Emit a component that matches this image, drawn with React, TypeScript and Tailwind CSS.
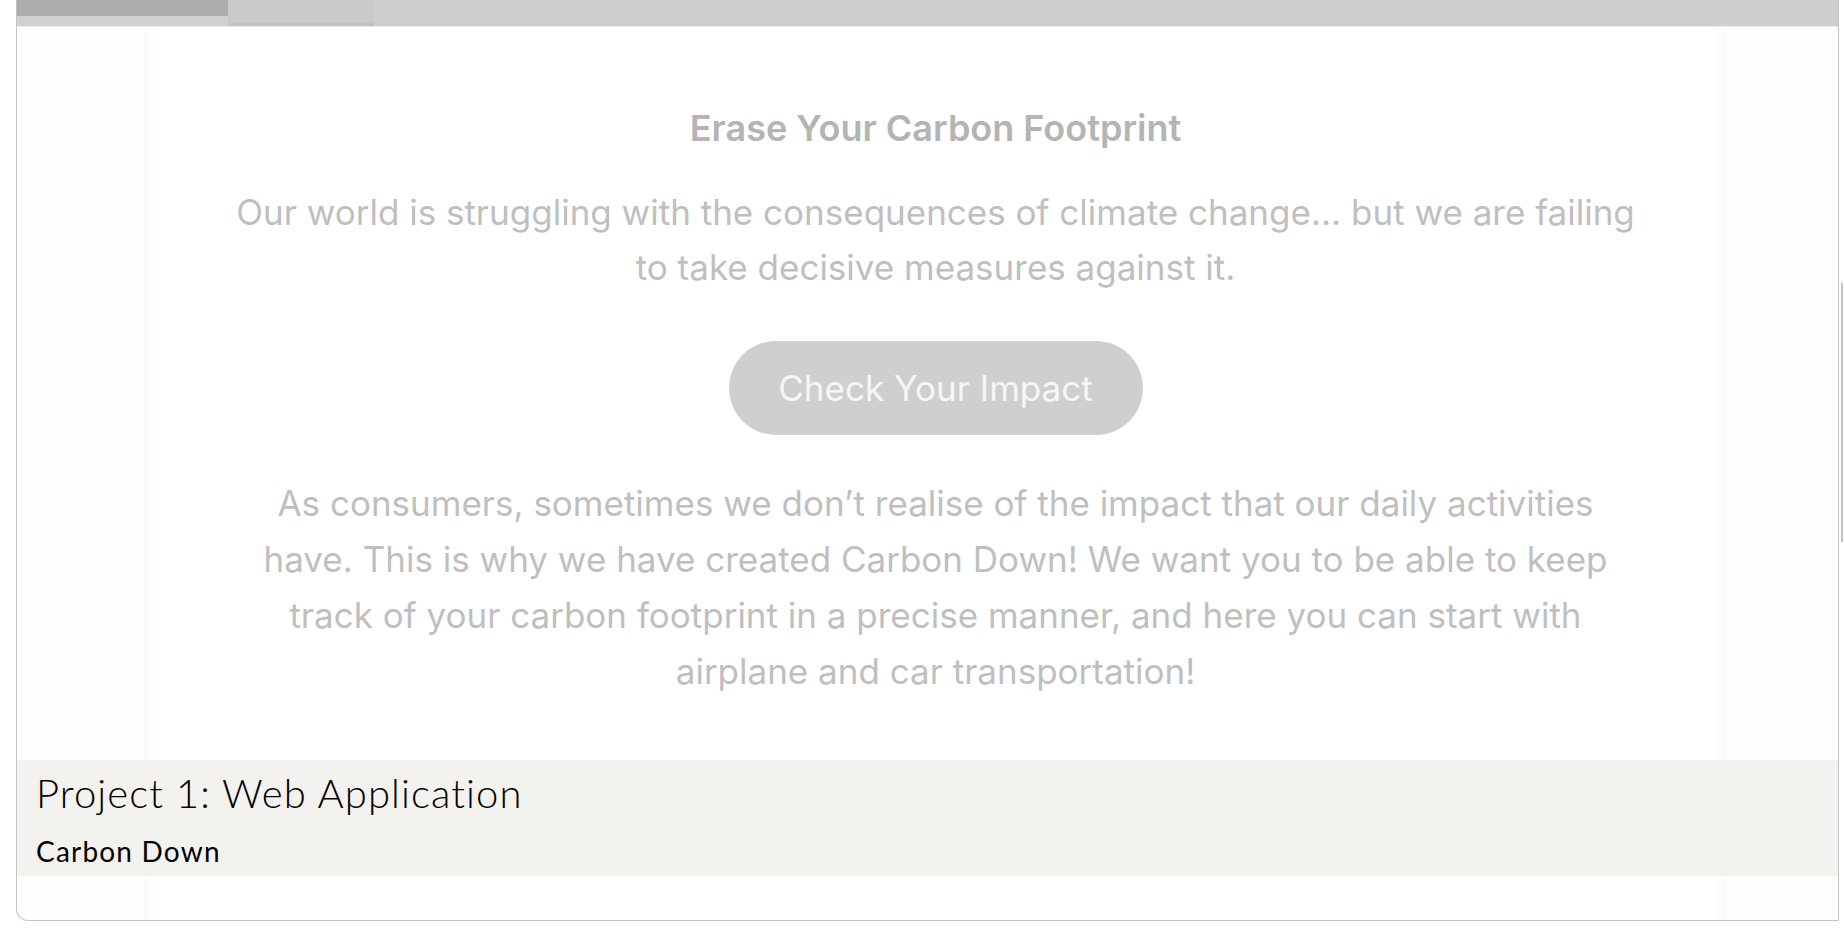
export default function App() {
  return (
    <div className="relative w-full h-[935px] bg-white overflow-hidden">
      <div className="relative ml-[16px] w-[1823px] h-[921px] border-x border-b border-[#c4c4c4] rounded-bl-[12px] bg-[#fefefe] overflow-hidden">
        {/* tab strip */}
        <div className="flex h-[26px] bg-[#cfcfcf]">
          <div className="w-[211px] flex flex-col">
            <div className="h-[16px] bg-[#acacac]" />
            <div className="flex-1 bg-[#d0d0d0]" />
          </div>
          <div className="w-[146px] bg-[#cacaca] border-b-[3px] border-[#c2c2c2]" />
          <div className="flex-1" />
        </div>
        <div className="h-px bg-[#ececec]" />

        {/* page preview */}
        <div className="ml-[127px] w-[1583px] h-[894px] bg-white shadow-[inset_18px_0_14px_-14px_rgba(0,0,0,0.03),inset_-18px_0_14px_-14px_rgba(0,0,0,0.03)] flex flex-col items-center text-center font-['Inter',sans-serif]">
          <h2 className="mt-[79px] text-[36px] leading-[44px] font-semibold text-[#b4b4b4]">
            Erase Your Carbon Footprint
          </h2>
          <p className="mt-[35px] text-[35px] leading-[55px] text-[#bfbfbf]">
            Our world is struggling with the consequences of climate change... but we are failing
            <br />
            to take decisive measures against it.
          </p>
          <button className="mt-[46px] w-[414px] h-[94px] rounded-full bg-[#cfcfcf] text-[35px] text-[#f6f6f6]">
            Check Your Impact
          </button>
          <p className="mt-[40px] text-[35px] leading-[56px] text-[#bfbfbf]">
            As consumers, sometimes we don’t realise of the impact that our daily activities
            <br />
            have. This is why we have created Carbon Down! We want you to be able to keep
            <br />
            track of your carbon footprint in a precise manner, and here you can start with
            <br />
            airplane and car transportation!
          </p>
        </div>

        {/* caption overlay */}
        <div className="absolute left-0 right-0 top-[760px] h-[116px] bg-[#f3f2ee] px-[19px] pt-[9px] font-['Lato',sans-serif] text-black">
          <div className="text-[40px] leading-[48px] font-light tracking-[1.1px]">Project 1: Web Application</div>
          <div className="mt-[17px] text-[28px] leading-[34px] tracking-[1.2px]">Carbon Down</div>
        </div>
      </div>

      {/* scrollbar */}
      <div className="absolute left-[1841px] top-[283px] w-[2px] h-[259px] bg-[#c4c4c4]" />
    </div>
  );
}
